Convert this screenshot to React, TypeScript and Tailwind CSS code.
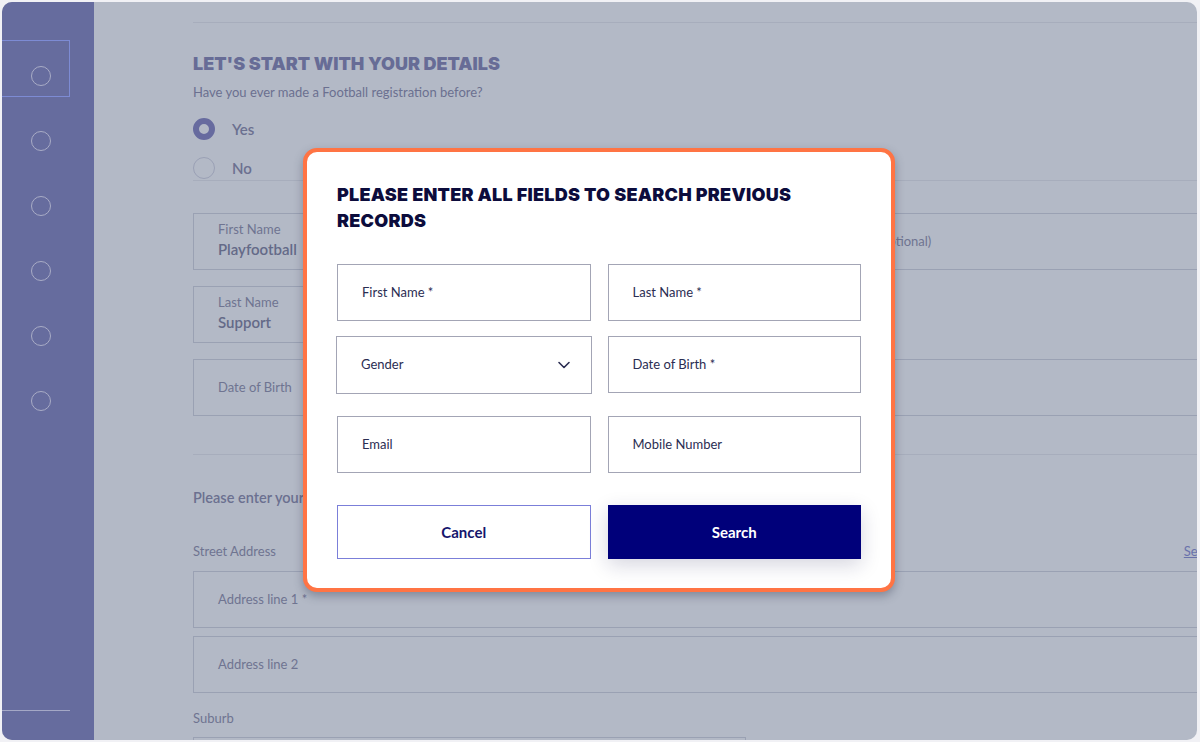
import React from "react";

const font = { fontFamily: "Lato, 'Noto Sans', sans-serif" };

function Circle() {
  return <div className="w-[20px] h-[20px] rounded-full border-[1.5px] border-[#a9acc6]" />;
}

function BgField({ label, value, className = "" }: { label?: string; value?: string; className?: string }) {
  return (
    <div className={"border border-[#9aa1b3] h-[57px] px-[24px] flex flex-col justify-center " + className}>
      {label && value ? (
        <div className="pb-[4px]">
          <div className="text-[13px] leading-[16px] text-[#6f7491]">{label}</div>
          <div className="text-[15px] leading-[20px] font-semibold text-[#646a88] mt-[2px]">{value}</div>
        </div>
      ) : (
        <div className="text-[13px] text-[#6f7491]">{label}</div>
      )}
    </div>
  );
}

function ModalField({ label, select = false, className = "" }: { label: string; select?: boolean; className?: string }) {
  return (
    <div className={"border border-[#a3a5b5] h-[57px] pl-[24px] pr-[20px] flex items-center justify-between " + className}>
      <span className="text-[13px] text-[#2b2d52]">{label}</span>
      {select && (
        <svg width="14" height="14" viewBox="0 0 14 14" fill="none">
          <path d="M2 4.5 L7 9.5 L12 4.5" stroke="#2b2d52" strokeWidth="1.6" strokeLinecap="round" strokeLinejoin="round" />
        </svg>
      )}
    </div>
  );
}

export default function App() {
  return (
    <div className="w-[1200px] h-[742px] bg-[#f1f1f5] pt-[2px] pb-[2px] pl-[2px] pr-[3px]" style={font}>
      <div className="relative w-full h-full rounded-[10px] overflow-hidden flex bg-[#b3b9c6]">
        {/* Sidebar */}
        <div className="w-[92px] h-full bg-[#666c9e] flex flex-col relative">
          <div className="mt-[38px] w-[68px] h-[57px] border border-[#7d8bd4] border-l-0 flex items-end justify-center pb-[10px] pl-[10px]">
            <Circle />
          </div>
          <div className="flex flex-col gap-[45px] mt-[34px] pl-[29px]">
            <Circle />
            <Circle />
            <Circle />
            <Circle />
            <Circle />
          </div>
          <div className="absolute left-0 top-[708px] w-[68px] border-t border-[#a4a8c6]" />
        </div>

        {/* Main */}
        <div className="flex-1 pl-[99px] text-[#6f7491]">
          <div className="mt-[20px] border-t border-[#a7adbc]" />
          <h1 className="mt-[29px] text-[18px] leading-[24px] font-black text-[#676c96] tracking-[0px]" style={{ fontFamily: "Inter, sans-serif" }}>
            LET'S START WITH YOUR DETAILS
          </h1>
          <p className="mt-[7px] text-[13px] leading-[18px] text-[#6b7090]">Have you ever made a Football registration before?</p>
          <div className="mt-[17px] flex items-center gap-[17px] h-[22px]">
            <div className="w-[22px] h-[22px] rounded-full border-[6px] border-[#676b9f]" />
            <span className="text-[15px] font-semibold text-[#6b7090]">Yes</span>
          </div>
          <div className="mt-[17px] flex items-center gap-[17px] h-[22px]">
            <div className="w-[22px] h-[22px] rounded-full border border-[#9aa0b5]" />
            <span className="text-[15px] font-semibold text-[#6b7090]">No</span>
          </div>
          <div className="border-t border-[#a7adbc] mt-[1px]" />

          <div className="mt-[32px] grid grid-cols-[553px_1fr] gap-x-[16px] gap-y-[16px] mr-[-20px]">
            <BgField label="First Name" value="Playfootball" />
            <BgField label="Middle Name (optional)" className="pl-[35px]" />
            <BgField label="Last Name" value="Support" />
            <div />
            <BgField label="Date of Birth" className="h-[56px]" />
            <BgField label="Gender" className="h-[56px]" />
          </div>
          <div className="mt-[38px] border-t border-[#a7adbc] mr-[-20px]" />
          <p className="mt-[32px] text-[14.5px] font-semibold text-[#6b7090]">Please enter your address</p>
          <div className="mt-[34px] flex justify-between items-center h-[18px]">
            <span className="text-[13px] text-[#6f7491]">Street Address</span>
            <span className="text-[13px] text-[#6a72ab] underline mr-[-72px]">Search address</span>
          </div>
          <div className="mt-[10px] flex flex-col gap-[8px] mr-[-20px]">
            <BgField label="Address line 1 *" />
            <BgField label="Address line 2" className="h-[56px]" />
          </div>
          <div className="mt-[16px] text-[13px] text-[#6f7491] h-[18px]">Suburb</div>
          <div className="mt-[10px] w-[553px] h-[40px] border border-[#9aa1b3]" />
        </div>

        {/* Modal */}
        <div className="absolute left-[301px] top-[146px] w-[592px] h-[444px] rounded-[14px] border-[4px] border-[#ff7444] bg-white shadow-[0_4px_10px_rgba(40,45,70,0.35)] px-[30px] pt-[30px]">
          <h2 className="text-[18px] leading-[26px] font-black text-[#0c0c3c] pr-[50px] tracking-[0.25px]" style={{ fontFamily: "Inter, sans-serif" }}>
            PLEASE ENTER ALL FIELDS TO SEARCH PREVIOUS RECORDS
          </h2>
          <div className="mt-[30px] grid grid-cols-2 gap-x-[17px]">
            <ModalField label="First Name *" />
            <ModalField label="Last Name *" />
            <ModalField label="Gender" select className="mt-[15px] mx-[-1px] h-[58px]" />
            <ModalField label="Date of Birth *" className="mt-[15px]" />
            <ModalField label="Email" className="mt-[22px]" />
            <ModalField label="Mobile Number" className="mt-[22px]" />
            <button className="mt-[32px] h-[54px] border border-[#7b7fd9] text-[15px] font-bold text-[#15156c]">Cancel</button>
            <button className="mt-[32px] h-[54px] bg-[#00007a] text-[15px] font-bold text-white shadow-[0_6px_20px_rgba(20,20,80,0.18)]">Search</button>
          </div>
        </div>
      </div>
    </div>
  );
}
